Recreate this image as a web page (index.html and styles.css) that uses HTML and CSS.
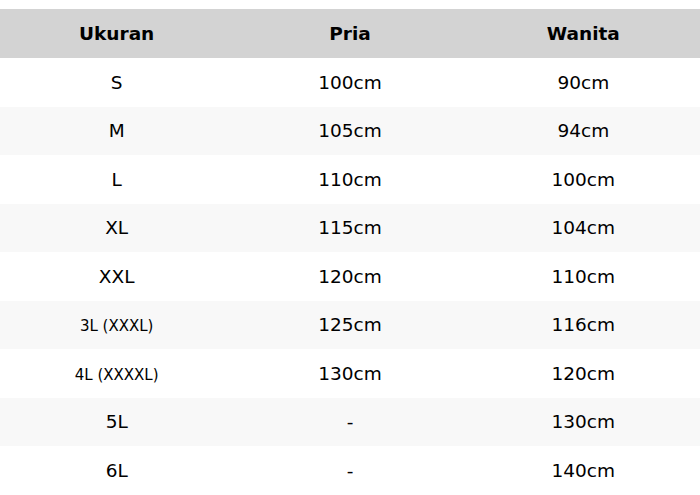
FILE: index.html
```html
<!DOCTYPE html>
<html>
<head>
<meta charset="utf-8">
<link rel="stylesheet" href="styles.css">
</head>
<body>
<table class="size-table">
  <thead>
    <tr><th>Ukuran</th><th>Pria</th><th>Wanita</th></tr>
  </thead>
  <tbody>
    <tr><td>S</td><td>100cm</td><td>90cm</td></tr>
    <tr><td>M</td><td>105cm</td><td>94cm</td></tr>
    <tr><td>L</td><td>110cm</td><td>100cm</td></tr>
    <tr><td>XL</td><td>115cm</td><td>104cm</td></tr>
    <tr><td>XXL</td><td>120cm</td><td>110cm</td></tr>
    <tr><td><span class="small">3L (XXXL)</span></td><td>125cm</td><td>116cm</td></tr>
    <tr><td><span class="small">4L (XXXXL)</span></td><td>130cm</td><td>120cm</td></tr>
    <tr><td>5L</td><td>-</td><td>130cm</td></tr>
    <tr><td>6L</td><td>-</td><td>140cm</td></tr>
  </tbody>
</table>
</body>
</html>
```
FILE: styles.css
```css
html, body {
  margin: 0;
  padding: 0;
  background: #fff;
}
body {
  padding-top: 9px;
  font-family: "DejaVu Sans", sans-serif;
  color: #000;
}
.size-table {
  width: 700px;
  border-collapse: collapse;
  table-layout: fixed;
}
.size-table th,
.size-table td {
  text-align: center;
  font-size: 18.5px;
  padding: 0 8px;
  height: 48.5px;
}
.size-table th {
  height: 49px;
  background: #d3d3d3;
  font-weight: bold;
}
.size-table tbody tr:nth-child(even) td {
  background: #f8f8f8;
}
.small {
  font-size: 15px;
}
```
